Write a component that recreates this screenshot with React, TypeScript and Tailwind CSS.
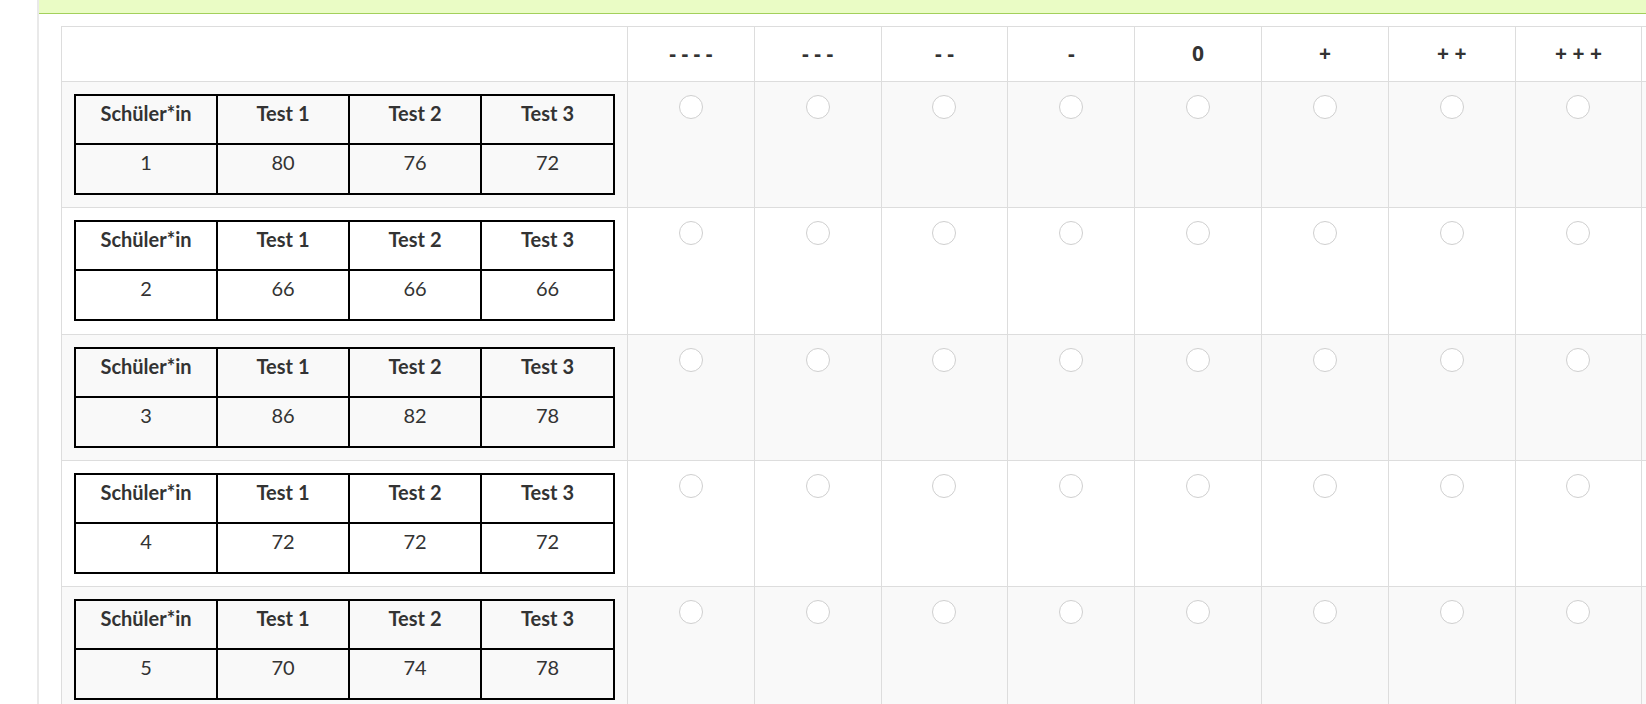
const scale = ["- - - -", "- - -", "- -", "-", "0", "+", "+ +", "+ + +", ""];

const students = [
  { id: 1, scores: [80, 76, 72] },
  { id: 2, scores: [66, 66, 66] },
  { id: 3, scores: [86, 82, 78] },
  { id: 4, scores: [72, 72, 72] },
  { id: 5, scores: [70, 74, 78] },
];

const gridCols = "grid grid-cols-[566px_repeat(9,126.8px)]";

function ScoreTable({ id, scores }: { id: number; scores: number[] }) {
  const head = ["Schüler*in", "Test 1", "Test 2", "Test 3"];
  const body = [String(id), ...scores.map(String)];
  return (
    <div className="w-[541px] grid grid-cols-[142px_132px_132px_133px] border-l-2 border-t-2 border-black font-['Lato',sans-serif] text-[20px] leading-[24px] text-[#333]">
      {head.map((h) => (
        <div key={h} className="h-[49px] border-r-2 border-b-2 border-black pt-[5px] text-center font-bold">
          {h}
        </div>
      ))}
      {body.map((v, i) => (
        <div key={i} className="h-[50px] border-r-2 border-b-2 border-black pt-[5px] text-center">
          {v}
        </div>
      ))}
    </div>
  );
}

export default function App() {
  return (
    <div className="h-screen w-full overflow-hidden bg-white pl-[37px]">
      <div className="h-full border-l-2 border-[#e9e9e9]">
        <div className="h-[14px] bg-[#eafcc5] border-b border-[#a3d05b]" />
        <div className="mt-[12px] ml-[22px] w-max border-l border-t border-[#dddddd]">
          {/* header */}
          <div className={`${gridCols} bg-white`}>
            <div className="h-[55px] border-r border-b border-[#dddddd]" />
            {scale.map((s, i) => (
              <div
                key={i}
                className="h-[55px] flex items-center justify-center border-r border-b border-[#dddddd] font-['Open_Sans',sans-serif] font-bold text-[21px] text-[#333] whitespace-pre"
              >
                {s}
              </div>
            ))}
          </div>
          {students.map((st, idx) => (
            <div key={st.id} className={`${gridCols} ${idx % 2 === 0 ? "bg-[#f9f9f9]" : "bg-white"}`}>
              <div className="h-[126.3px] p-[12px] border-r border-b border-[#dddddd]">
                <ScoreTable id={st.id} scores={st.scores} />
              </div>
              {scale.map((_, i) => (
                <div key={i} className="h-[126.3px] flex justify-center pt-[13px] border-r border-b border-[#dddddd]">
                  <span className="block w-6 h-6 rounded-full border border-[#cfcfcf] bg-white" />
                </div>
              ))}
            </div>
          ))}
        </div>
      </div>
    </div>
  );
}
